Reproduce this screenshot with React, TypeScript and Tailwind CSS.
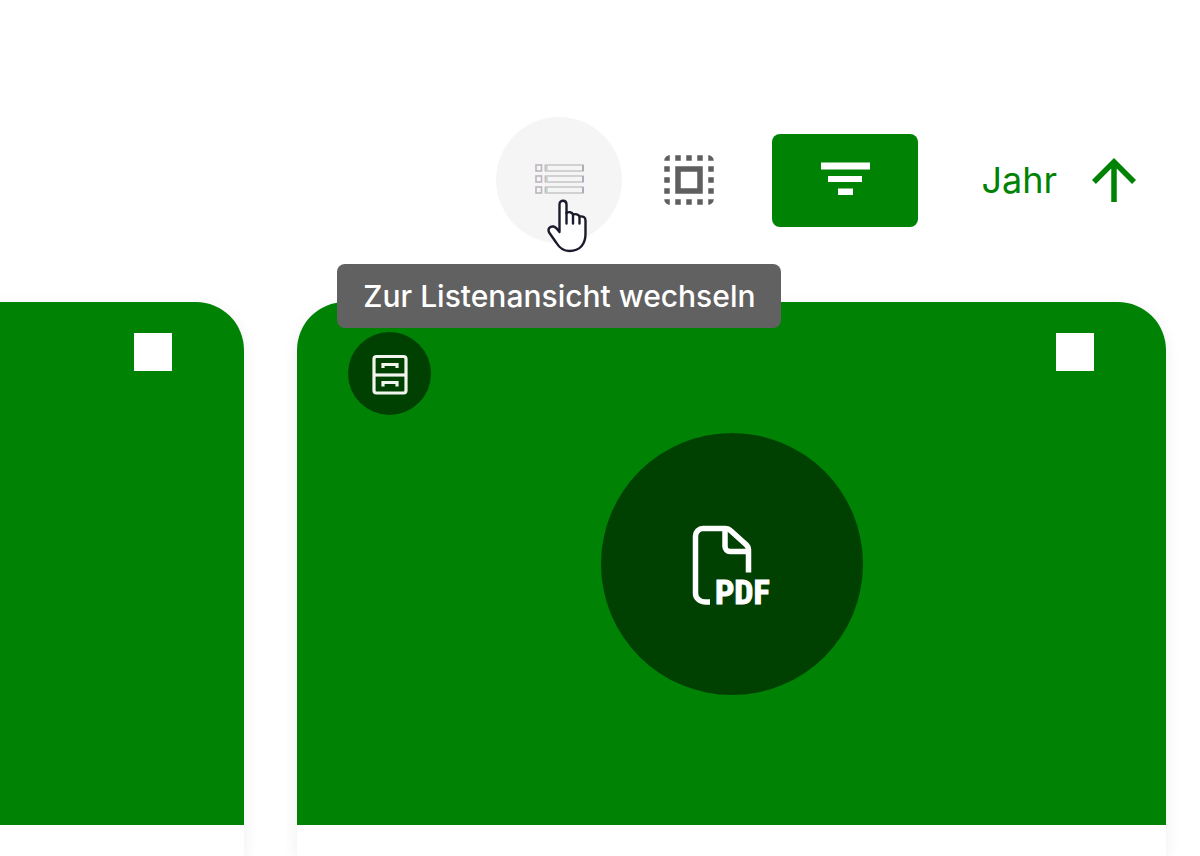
import { MdArrowUpward, MdSelectAll } from "react-icons/md";

interface DocumentCardProps {
  title: string;
  isArchived?: boolean;
  isPdf?: boolean;
}

function ListIcon() {
  return (
    <svg viewBox="0 0 66 66" className="size-[66px]" fill="none" aria-hidden>
      {[17, 28, 39].map((y) => (
        <g key={y} strokeWidth="1.6">
          <rect x="10" y={y + 1} width="5.5" height="6" stroke="#bcb4bd" />
          <rect x="19.5" y={y + 1} width="37.5" height="6" stroke="#c9c9c9" />
          <path d={`M57 ${y + 1}v6`} stroke="#a3a3b5" />
          <path d={`M19.5 ${y + 1}v6`} stroke="#d3b9a6" />
          <path d={`M21 ${y + 2}v4`} stroke="#a9d8ee" />
        </g>
      ))}
    </svg>
  );
}

function FilterIcon() {
  return (
    <svg
      viewBox="0 0 66 66"
      className="size-[66px]"
      fill="currentColor"
      aria-hidden
    >
      <rect x="9" y="15.5" width="49" height="7" />
      <rect x="16" y="29" width="34" height="6" />
      <rect x="26" y="41.5" width="15" height="6.5" />
    </svg>
  );
}

function CabinetIcon() {
  return (
    <svg
      viewBox="0 0 42 42"
      className="size-[42px]"
      fill="none"
      stroke="#f1f5ee"
      strokeWidth="3.2"
      aria-hidden
    >
      <rect x="5" y="3.5" width="32" height="36.5" rx="2.5" />
      <path d="M5 22h32" />
      <path d="M14 15v-3.5h14V15M14 33.500v-4h14v4" />
    </svg>
  );
}

function PdfIcon() {
  return (
    <svg
      viewBox="0 0 80 80"
      className="size-20 overflow-visible"
      fill="none"
      aria-hidden
    >
      <g stroke="white" strokeWidth="5.5">
        <path d="M18 78h-4.500a10 8.500 0 0 1-10-8.500V12a7.500 7.500 0 0 1 7.500-7.500h22.500c2 0 3.500.5 5 2L54.500 21c1.500 1.500 2 2.500 2 4.500v23" />
        <path d="M33 4.500v18a5 5 0 0 0 5 5h18" />
      </g>
      <text
        x="23"
        y="80"
        fill="white"
        stroke="white"
        className="font-['Roboto_Condensed','Roboto',sans-serif] text-[34px] font-bold"
      >
        PDF
      </text>
    </svg>
  );
}

function HandCursor() {
  return (
    <svg
      viewBox="0 0 40 54"
      className="pointer-events-none absolute top-[82px] left-[51px] z-20 h-[54px] w-10"
      fill="white"
      stroke="#1c1b2e"
      strokeWidth="2.4"
      strokeLinejoin="round"
      strokeLinecap="round"
      aria-hidden
    >
      <path d="M12.500 33V5.500c0-5 7-5 7 0V14c2-1.500 5.500-1 6.500 1.500 2.500-1 5.500 0 6.500 2 3.500-.5 6 .5 6 4V35c0 10-5.500 17-16 17-6 0-10-3-13-8L2.500 34c-2.500-4 .5-7 4-6.500 2.500.5 4 3 6 5.500Z" />
      <path d="M19.500 14v10.500M26 15.500v9M32.500 17.500v7" />
    </svg>
  );
}

function Toolbar() {
  return (
    <div className="flex items-center justify-end pt-[117px] pr-[53px] pb-[59px]">
      <div className="relative mr-1">
        <button
          type="button"
          aria-label="Listenansicht"
          aria-describedby="view-tooltip"
          className="flex size-[126px] cursor-pointer items-center justify-center rounded-full bg-[#f5f5f5]"
        >
          <ListIcon />
        </button>
        <HandCursor />
        <div
          id="view-tooltip"
          role="tooltip"
          className="absolute top-[147px] left-1/2 z-10 flex h-16 w-[444px] -translate-x-1/2 items-center justify-center rounded-lg bg-[#616161] text-3xl font-medium whitespace-nowrap text-white"
        >
          Zur Listenansicht wechseln
        </div>
      </div>
      <button
        type="button"
        aria-label="Alle auswählen"
        className="mr-5 flex size-[126px] items-center justify-center rounded-full text-[#5f5f5f]"
      >
        <MdSelectAll className="size-[66px]" />
      </button>
      <button
        type="button"
        aria-label="Filter"
        className="flex h-[93px] w-[146px] items-center justify-center rounded-lg bg-[#008205] text-white"
      >
        <FilterIcon />
      </button>
      <button
        type="button"
        className="ml-[63px] flex items-center gap-6 text-4xl text-[#008205]"
      >
        Jahr
        <MdArrowUpward className="size-[66px]" />
      </button>
    </div>
  );
}

function DocumentCard({
  title,
  isArchived = false,
  isPdf = false,
}: DocumentCardProps) {
  return (
    <article className="flex w-[869px] shrink-0 flex-col rounded-t-[48px] bg-white shadow-[0_4px_16px_rgba(0,0,0,0.07)]">
      <div className="relative flex h-[523px] items-center justify-center rounded-t-[48px] bg-[#008205]">
        {isArchived && (
          <span className="absolute top-[30px] left-[51px] flex size-[83px] items-center justify-center rounded-full bg-black/50">
            <CabinetIcon />
          </span>
        )}
        <input
          type="checkbox"
          aria-label={title}
          className="absolute top-[31px] right-[72px] size-[38px] appearance-none bg-white"
        />
        {isPdf && (
          <span className="flex size-[262px] items-center justify-center rounded-full bg-black/50">
            <PdfIcon />
          </span>
        )}
      </div>
      <div className="flex-1" />
    </article>
  );
}

function App() {
  return (
    <main className="flex h-screen flex-col overflow-hidden bg-white font-['Inter',sans-serif]">
      <Toolbar />
      <div className="flex flex-1 justify-end gap-[53px] pr-[34px]">
        <DocumentCard title="Dokument 1 auswählen" />
        <DocumentCard title="Dokument 2 auswählen" isArchived isPdf />
      </div>
    </main>
  );
}

export default App;
